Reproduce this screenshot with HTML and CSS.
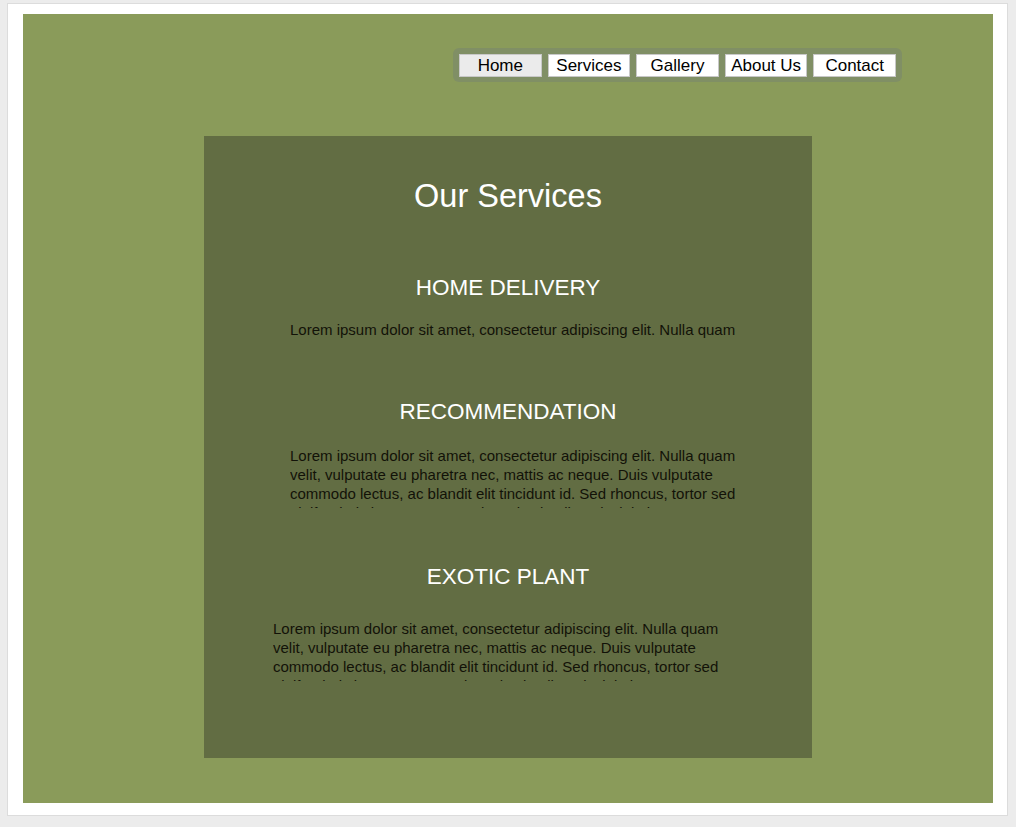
FILE: index.html
```html
<!DOCTYPE html>
<html>
<head>
<meta charset="utf-8">
<link rel="stylesheet" href="styles.css">
</head>
<body>
<div class="frame">
  <div class="page">
    <nav class="nav">
      <a class="nav-btn active">Home</a>
      <a class="nav-btn">Services</a>
      <a class="nav-btn">Gallery</a>
      <a class="nav-btn">About Us</a>
      <a class="nav-btn">Contact</a>
    </nav>
    <main class="panel">
      <h1 class="title">Our Services</h1>
      <section class="service s1">
        <h2 class="service-title">HOME DELIVERY</h2>
        <p class="service-text one">Lorem ipsum dolor sit amet, consectetur adipiscing elit. Nulla quam velit, vulputate eu pharetra nec, mattis ac neque. Duis vulputate commodo lectus, ac blandit elit tincidunt id. Sed rhoncus, tortor sed eleifend tristique, tortor mauris molestie elit, et lacinia ipsum quam nec dui.</p>
      </section>
      <section class="service s2">
        <h2 class="service-title">RECOMMENDATION</h2>
        <p class="service-text">Lorem ipsum dolor sit amet, consectetur adipiscing elit. Nulla quam velit, vulputate eu pharetra nec, mattis ac neque. Duis vulputate commodo lectus, ac blandit elit tincidunt id. Sed rhoncus, tortor sed eleifend tristique, tortor mauris molestie elit, et lacinia ipsum quam nec dui.</p>
      </section>
      <section class="service s3">
        <h2 class="service-title">EXOTIC PLANT</h2>
        <p class="service-text shifted">Lorem ipsum dolor sit amet, consectetur adipiscing elit. Nulla quam velit, vulputate eu pharetra nec, mattis ac neque. Duis vulputate commodo lectus, ac blandit elit tincidunt id. Sed rhoncus, tortor sed eleifend tristique, tortor mauris molestie elit, et lacinia ipsum quam nec dui.</p>
      </section>
    </main>
  </div>
</div>
</body>
</html>
```

FILE: styles.css
```css
html, body {
  margin: 0;
  padding: 0;
}
body {
  background: #ececec;
  font-family: "Liberation Sans", Arial, sans-serif;
  height: 827px;
  overflow: hidden;
}
.frame {
  margin: 3px 8px 0 7px;
  background: #ffffff;
  border: 1px solid #dcdcdc;
  padding: 10px 14px 12px 15px;
  box-sizing: border-box;
  height: 813px;
}
.page {
  background: #8a9b5a;
  height: 789px;
  display: flex;
  flex-direction: column;
  padding-top: 34px;
  box-sizing: border-box;
}
.nav {
  align-self: flex-end;
  margin-right: 91px;
  display: flex;
  gap: 6px;
  padding: 5px 6px;
  background: #808f65;
  border-radius: 6px;
  height: 34px;
  box-sizing: border-box;
  align-items: center;
}
.nav-btn {
  width: 82.6px;
  height: 23px;
  box-sizing: border-box;
  background: #ffffff;
  border: 1px solid #c8c8c8;
  color: #000;
  font-size: 17px;
  line-height: 21px;
  text-align: center;
  display: block;
}
.nav-btn.active {
  background: #ebebeb;
}
.panel {
  margin: 54px 0 0 181px;
  width: 608px;
  height: 622px;
  background: #626d43;
  box-sizing: border-box;
  padding-top: 1px;
  display: flex;
  flex-direction: column;
}
.title {
  margin: 39px 0 0;
  font-size: 32.5px;
  font-weight: normal;
  color: #ffffff;
  text-align: center;
  line-height: 40px;
}
.service {
  display: flex;
  flex-direction: column;
}
.service-title {
  margin: 0;
  font-size: 22.5px;
  font-weight: normal;
  color: #ffffff;
  text-align: center;
  line-height: 26px;
}
.s1 { margin-top: 59px; }
.s2 { margin-top: 60px; }
.s3 { margin-top: 56px; }
.service-text {
  margin: 21px 0 0 86px;
  width: 452px;
  font-size: 15px;
  line-height: 19px;
  color: #121208;
  height: 62px;
  overflow: hidden;
}
.s1 .service-text {
  margin-top: 19px;
}
.service-text.one {
  height: 19px;
}
.s3 .service-text {
  margin-top: 29px;
}
.service-text.shifted {
  margin-left: 69px;
}
```
